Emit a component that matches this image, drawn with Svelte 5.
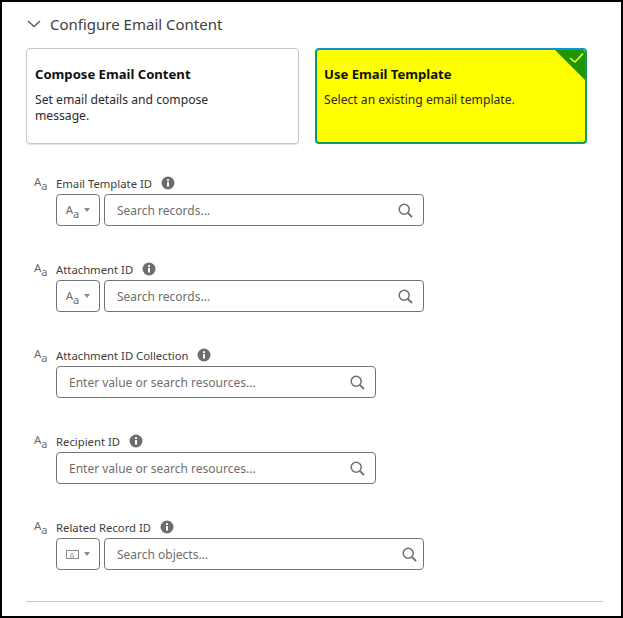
<script>
  const fields = [
    { label: 'Email Template ID', picker: 'text', placeholder: 'Search records...' },
    { label: 'Attachment ID', picker: 'text', placeholder: 'Search records...' },
    { label: 'Attachment ID Collection', placeholder: 'Enter value or search resources...' },
    { label: 'Recipient ID', placeholder: 'Enter value or search resources...' },
    { label: 'Related Record ID', picker: 'object', placeholder: 'Search objects...' }
  ];
</script>

<div class="frame">
  <div class="section-head">
    <svg class="chevron" width="14" height="8" viewBox="0 0 14 8">
      <path d="M1 1l6 5.6L13 1" fill="none" stroke="#5c5c5c" stroke-width="1.4" />
    </svg>
    <span>Configure Email Content</span>
  </div>

  <div class="cards">
    <div class="card">
      <h3>Compose Email Content</h3>
      <p>Set email details and compose<br />message.</p>
    </div>
    <div class="card selected">
      <h3>Use Email Template</h3>
      <p>Select an existing email template.</p>
      <svg class="corner" width="30" height="30" viewBox="0 0 30 30">
        <path d="M0 0H27a3 3 0 0 1 3 3V30z" fill="#1f9600" />
        <path d="M15 8l5 4L28 3.500" fill="none" stroke="#ffff33" stroke-width="1.500" />
      </svg>
    </div>
  </div>

  <div class="fields">
    {#each fields as field}
      <div class="field">
        <span class="type-icon">A<sub>a</sub></span>
        <div class="field-body">
          <div class="label">
            {field.label}
            <svg width="14" height="14" viewBox="0 0 14 14">
              <circle cx="7" cy="7" r="6.500" fill="#706e6b" />
              <rect x="6" y="6" width="2" height="4.500" fill="#fff" />
              <rect x="6" y="3.200" width="2" height="1.800" fill="#fff" />
            </svg>
          </div>
          <div class="controls">
            {#if field.picker}
              <div class="picker">
                {#if field.picker === 'text'}
                  <span class="type-icon small">A<sub>a</sub></span>
                {:else}
                  <svg width="13" height="9" viewBox="0 0 13 9">
                    <rect x="0.500" y="0.500" width="12" height="8" fill="none" stroke="#8a8a8a" />
                    <path d="M4 7l2-4 2 4z" fill="none" stroke="#8a8a8a" stroke-width="0.700" />
                  </svg>
                {/if}
                <svg class="caret" width="6" height="4" viewBox="0 0 6 4"><path d="M0 0h6L3 4z" fill="#8a8a8a" /></svg>
              </div>
            {/if}
            <div class="search" class:objects={field.picker === 'object'}>
              <span class="placeholder">{field.placeholder}</span>
              <svg width="15" height="15" viewBox="0 0 15 15">
                <circle cx="6.200" cy="6.200" r="5" fill="none" stroke="#706e6b" stroke-width="1.500" />
                <path d="M9.800 9.800L14 14" stroke="#706e6b" stroke-width="1.800" />
              </svg>
            </div>
          </div>
        </div>
      </div>
    {/each}
  </div>

  <div class="divider"></div>
</div>

<style>
  :global(body) {
    background: #fff;
  }

  .frame {
    box-sizing: border-box;
    width: 623px;
    height: 618px;
    border: 2px solid #000;
    padding: 0 18px 0 24px;
    font-family: 'Noto Sans', sans-serif;
    color: #181818;
    overflow: hidden;
    display: flex;
    flex-direction: column;
  }

  .section-head {
    display: flex;
    align-items: center;
    height: 44px;
    margin-bottom: 2px;
    padding-left: 1px;
    gap: 9px;
    font-size: 15px;
    color: #3e3e3c;
  }

  .cards {
    display: flex;
    gap: 16px;
  }

  .card {
    position: relative;
    box-sizing: border-box;
    width: 273px;
    height: 96px;
    padding: 16px 8px 0;
    border: 1px solid #c9c9c9;
    border-radius: 4px;
    box-shadow: 0 1px 1px rgba(0, 0, 0, 0.12);
  }

  .card h3 {
    margin: 0 0 9px;
    font-size: 13.100px;
    line-height: 18px;
    font-weight: 700;
    color: #111;
  }

  .card p {
    margin: 0;
    font-size: 12.150px;
    line-height: 16px;
    color: #2b2826;
  }

  .card.selected {
    width: 272px;
    background: #ff0;
    border: 2px solid #0f9a6a;
    border-top-color: #0a95d8;
    padding: 15px 7px 0;
    box-shadow: none;
    overflow: hidden;
  }

  .corner {
    position: absolute;
    top: 0;
    right: 0;
  }

  .fields {
    display: flex;
    flex-direction: column;
    gap: 22px;
    margin-top: 30px;
    padding-left: 8px;
  }

  .field {
    display: flex;
    height: 64px;
  }

  .type-icon {
    width: 22px;
    font-size: 11.500px;
    line-height: 16px;
    color: #6b6b6b;
  }

  .type-icon sub {
    font-size: 11px;
    line-height: 0;
    vertical-align: -4px;
  }

  .type-icon.small {
    width: auto;
  }

  .label {
    display: flex;
    align-items: center;
    gap: 9px;
    height: 18px;
    margin-bottom: 2px;
    font-size: 11.300px;
    color: #3e3e3c;
  }

  .controls {
    display: flex;
    gap: 4px;
  }

  .picker,
  .search {
    box-sizing: border-box;
    height: 32px;
    display: flex;
    align-items: center;
    border: 1px solid #747474;
    border-radius: 4px;
  }

  .picker {
    width: 44px;
    justify-content: center;
    gap: 5px;
  }

  .search {
    width: 320px;
    justify-content: space-between;
    padding: 0 10px 0 12px;
  }

  .search.objects {
    padding-right: 6px;
  }

  .placeholder {
    font-size: 12px;
    color: #706e6b;
  }

  .divider {
    margin-top: auto;
    margin-bottom: 14px;
    height: 1px;
    width: 577px;
    background: #c9c9c9;
  }
</style>
